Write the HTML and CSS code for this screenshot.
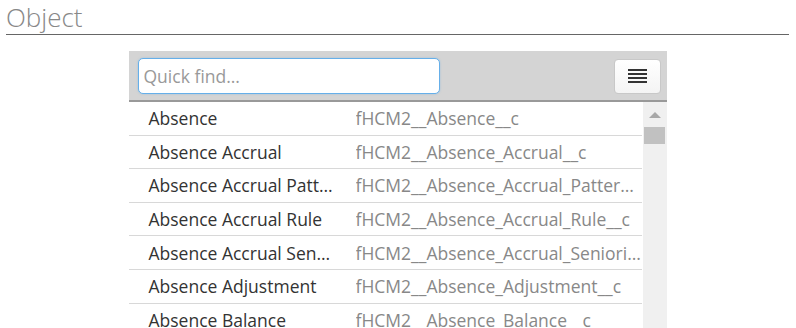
FILE: index.html
```html
<!DOCTYPE html>
<html lang="en">
<head>
    <meta charset="UTF-8">
    <title>Object</title>
    <link rel="stylesheet" href="styles.css">
</head>
<body>
    <h2 class="section-title">Object</h2>

    <div class="picker">
        <div class="picker-bar">
            <input type="text" class="quick-find" placeholder="Quick find...">
            <button class="menu-btn" title="Menu">
                <span class="bars"><i></i><i></i><i></i><i></i></span>
            </button>
        </div>
        <div class="picker-body">
            <ul class="object-list">
                <li><span class="name">Absence</span><span class="api">fHCM2__Absence__c</span></li>
                <li><span class="name">Absence Accrual</span><span class="api">fHCM2__Absence_Accrual__c</span></li>
                <li><span class="name">Absence Accrual Pattern</span><span class="api">fHCM2__Absence_Accrual_Pattern__c</span></li>
                <li><span class="name">Absence Accrual Rule</span><span class="api">fHCM2__Absence_Accrual_Rule__c</span></li>
                <li><span class="name">Absence Accrual Seniority</span><span class="api">fHCM2__Absence_Accrual_Seniority__c</span></li>
                <li><span class="name">Absence Adjustment</span><span class="api">fHCM2__Absence_Adjustment__c</span></li>
                <li><span class="name">Absence Balance</span><span class="api">fHCM2__Absence_Balance__c</span></li>
            </ul>
            <div class="scrollbar">
                <span class="arrow"></span>
                <span class="thumb"></span>
            </div>
        </div>
    </div>
</body>
</html>
```

FILE: styles.css
```css
body {
    font-family: "Open Sans", Arial, sans-serif;
    margin: 0;
    padding: 0 7px 0 6px;
    background-color: white;
    color: #333;
    overflow: hidden;
}
.section-title {
    font-weight: 300;
    font-size: 26px;
    line-height: 34px;
    color: #888;
    margin: 0;
    border-bottom: 1px solid #666;
}
.picker {
    width: 538px;
    margin: 16px auto 0;
}
.picker-bar {
    display: flex;
    align-items: center;
    justify-content: space-between;
    height: 49px;
    padding: 0 6px 0 9px;
    background-color: #d4d4d4;
    border-bottom: 2px solid #999;
}
.quick-find {
    width: 302px;
    height: 36px;
    box-sizing: border-box;
    border: 1px solid #66afe9;
    border-radius: 5px;
    padding: 0 5px;
    font-family: "Open Sans", Arial, sans-serif;
    font-size: 17.5px;
    color: #333;
    outline: none;
    box-shadow: 0 0 2px rgba(102, 175, 233, 0.5);
}
.quick-find::placeholder {
    color: #999;
}
.menu-btn {
    width: 47px;
    height: 35px;
    margin-top: 1px;
    border: 1px solid #c8c8c8;
    border-radius: 4px;
    background: linear-gradient(#fff, #f4f4f4);
    display: flex;
    align-items: center;
    justify-content: center;
    padding: 0;
}
.bars {
    display: flex;
    flex-direction: column;
    gap: 2px;
    width: 19px;
}
.bars i {
    display: block;
    height: 2px;
    background-color: #333;
}
.picker-body {
    display: flex;
}
.object-list {
    list-style: none;
    margin: 0;
    padding: 0;
    flex: 1;
    min-width: 0;
}
.object-list li {
    display: flex;
    align-items: center;
    height: 32.6px;
    border-bottom: 1px solid #d8d8d8;
    font-size: 17.5px;
}
.name {
    width: 186px;
    padding-left: 20px;
    margin-right: 21px;
    white-space: nowrap;
    overflow: hidden;
    text-overflow: ellipsis;
}
.api {
    flex: 1;
    min-width: 0;
    color: #888;
    white-space: nowrap;
    overflow: hidden;
    text-overflow: ellipsis;
}
.scrollbar {
    width: 24px;
    margin-left: 1px;
    background-color: #f0f0f0;
    display: flex;
    flex-direction: column;
    align-items: center;
}
.arrow {
    margin-top: 10px;
    width: 0;
    height: 0;
    border-left: 6px solid transparent;
    border-right: 6px solid transparent;
    border-bottom: 6px solid #a8a8a8;
}
.thumb {
    margin-top: 9px;
    width: 21px;
    height: 17px;
    background-color: #c1c1c1;
}
```
